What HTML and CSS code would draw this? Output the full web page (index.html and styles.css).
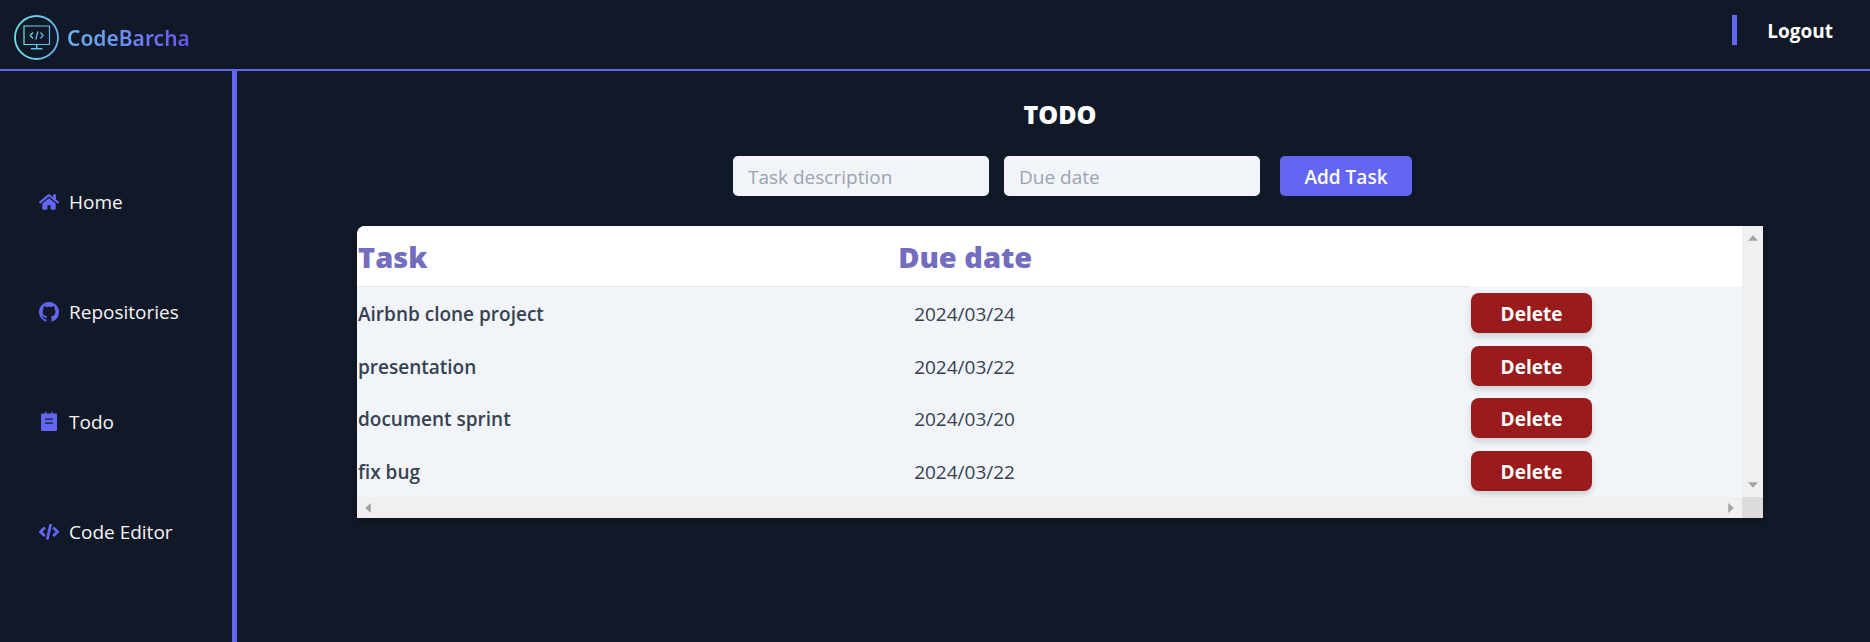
FILE: index.html
```html
<!DOCTYPE html>
<html lang="en">
<head>
<meta charset="utf-8">
<meta name="viewport" content="width=device-width, initial-scale=1">
<title>CodeBarcha – Todo</title>
<link rel="stylesheet" href="styles.css">
</head>
<body>
<header class="topbar">
  <a class="brand" href="#">
    <svg class="brand-mark" viewBox="0 0 45 45" aria-hidden="true">
      <defs>
        <linearGradient id="ring" x1="0" y1="0" x2="1" y2="0">
          <stop offset="0" stop-color="#6fe0e6"/>
          <stop offset="1" stop-color="#66b4ee"/>
        </linearGradient>
      </defs>
      <g fill="none" stroke="url(#ring)">
        <circle cx="22.5" cy="22.5" r="21.5" stroke-width="1.8"/>
        <path d="M10 11h25.5v18.500H10z" stroke-width="1.2"/>
        <path d="M22.700 29.500L22.710 33.500" stroke="#62c4ea" stroke-width="1.4"/>
        <path d="M17 33.800L28.500 33.810" stroke="#62c4ea" stroke-width="1.4"/>
        <path d="M19 17.500l-2.700 3 2.700 3M26.500 17.500l2.700 3-2.700 3M23.800 16.500l-2 8" stroke-width="1.200"/>
      </g>
    </svg>
    <span class="brand-name">CodeBarcha</span>
  </a>
  <div class="account"><button class="logout" type="button">Logout</button></div>
</header>
<div class="layout">
  <nav class="sidebar">
    <a class="nav-link" href="#">
      <svg class="nav-icon" viewBox="0 0 576 512" aria-hidden="true"><path d="M280.370 148.260L96 300.110V464a16 16 0 0 0 16 16l112.060-.290a16 16 0 0 0 15.920-16V368a16 16 0 0 1 16-16h64a16 16 0 0 1 16 16v95.640a16 16 0 0 0 16 16.050L464 480a16 16 0 0 0 16-16V300L295.670 148.260a12.190 12.190 0 0 0-15.300 0zM571.600 251.470L488 182.560V44.050a12 12 0 0 0-12-12h-56a12 12 0 0 0-12 12v72.610L318.470 43a48 48 0 0 0-61 0L4.340 251.470a12 12 0 0 0-1.600 16.900l25.500 31A12 12 0 0 0 45.150 301l235.220-193.740a12.190 12.190 0 0 1 15.300 0L530.900 301a12 12 0 0 0 16.900-1.600l25.500-31a12 12 0 0 0-1.700-16.930z"/></svg>
      <span>Home</span>
    </a>
    <a class="nav-link" href="#">
      <svg class="nav-icon" viewBox="0 0 16 16" aria-hidden="true"><path d="M8 0C3.580 0 0 3.580 0 8c0 3.540 2.290 6.530 5.470 7.590.4.070.55-.170.55-.380 0-.190-.010-.820-.010-1.490-2.010.370-2.530-.490-2.690-.940-.090-.230-.480-.940-.820-1.130-.280-.150-.680-.520-.010-.530.630-.010 1.080.580 1.230.820.720 1.210 1.870.870 2.330.660.070-.520.280-.870.510-1.070-1.780-.200-3.640-.890-3.640-3.950 0-.870.310-1.590.820-2.150-.080-.200-.360-1.020.080-2.120 0 0 .670-.210 2.200.820.640-.180 1.320-.270 2-.270s1.360.090 2 .270c1.530-1.040 2.200-.820 2.200-.820.440 1.100.160 1.920.080 2.120.510.560.820 1.270.820 2.150 0 3.070-1.870 3.750-3.650 3.950.290.250.540.730.540 1.480 0 1.070-.010 1.930-.010 2.200 0 .210.150.460.550.380A8.010 8.010 0 0 0 16 8c0-4.420-3.580-8-8-8z"/></svg>
      <span>Repositories</span>
    </a>
    <a class="nav-link" href="#">
      <svg class="nav-icon" viewBox="0 0 20 20" aria-hidden="true"><path fill-rule="evenodd" d="M3 1.500h3V0h1.500v1.500h5V0H14v1.500h3a1 1 0 0 1 1 1V18a1 1 0 0 1-1 1H3a1 1 0 0 1-1-1V2.500a1 1 0 0 1 1-1zM6 6.500v1.300h8V6.500zM6 10.500v1.300h8v-1.300z"/></svg>
      <span>Todo</span>
    </a>
    <a class="nav-link" href="#">
      <svg class="nav-icon" viewBox="0 0 20 20" aria-hidden="true"><path d="M5.800 5.500L1.500 9.800l4.300 4.300M14.200 5.500l4.300 4.300-4.300 4.300M11.800 2l-3.600 15.500" fill="none" stroke="currentColor" stroke-width="2.800"/></svg>
      <span>Code Editor</span>
    </a>
  </nav>
  <main class="content">
    <h1 class="title">TODO</h1>
    <form class="task-form">
      <input class="field" type="text" placeholder="Task description" aria-label="Task description">
      <input class="field" type="text" placeholder="Due date" aria-label="Due date">
      <button class="add" type="button">Add Task</button>
    </form>
    <section class="panel">
      <table class="tasks">
        <thead><tr><th class="col-task">Task</th><th>Due date</th><td class="col-action"></td></tr></thead>
        <tbody>
          <tr><td class="name">Airbnb clone project</td><td class="date">2024/03/24</td><td><button class="delete" type="button">Delete</button></td></tr>
          <tr><td class="name">presentation</td><td class="date">2024/03/22</td><td><button class="delete" type="button">Delete</button></td></tr>
          <tr><td class="name">document sprint</td><td class="date">2024/03/20</td><td><button class="delete" type="button">Delete</button></td></tr>
          <tr><td class="name">fix bug</td><td class="date">2024/03/22</td><td><button class="delete" type="button">Delete</button></td></tr>
        </tbody>
      </table>
      <div class="track track-y">
        <svg class="arrow" viewBox="0 0 9 9" aria-hidden="true"><path d="M0 7l4.500-5L9 7z"/></svg>
        <svg class="arrow" viewBox="0 0 9 9" aria-hidden="true"><path d="M0 2l4.500 5L9 2z"/></svg>
      </div>
      <div class="track track-x">
        <svg class="arrow" viewBox="0 0 9 9" aria-hidden="true"><path d="M7 0L2 4.500 7 9z"/></svg>
        <svg class="arrow" viewBox="0 0 9 9" aria-hidden="true"><path d="M2 0l5 4.500L2 9z"/></svg>
      </div>
      <div class="corner"></div>
    </section>
  </main>
</div>
</body>
</html>
```

FILE: styles.css
```css
* { box-sizing: border-box; }

body {
  margin: 0;
  min-height: 100vh;
  display: flex;
  flex-direction: column;
  background: #111827;
  color: #fff;
  font-family: "Open Sans", "Noto Sans", sans-serif;
  font-size: 19px;
  line-height: 30px;
}

button, input { font: inherit; border: 0; }
button { cursor: pointer; }
a { color: inherit; text-decoration: none; }

.topbar {
  display: flex;
  justify-content: space-between;
  align-items: flex-start;
  padding: 15px 37px 9px 14px;
  border-bottom: 2px solid #6366f1;
}

.brand { display: flex; align-items: center; gap: 8px; }
.brand-mark { width: 45px; height: 45px; }
.brand-name {
  font-family: "Noto Sans", sans-serif;
  font-size: 21px;
  font-weight: 600;
  background: linear-gradient(90deg, #69b3f0, #6b8cf5 50%, #6a4fe8);
  -webkit-background-clip: text;
  background-clip: text;
  color: transparent;
}

.account { padding-left: 30px; border-left: 5px solid #6366f1; }
.logout { display: block; height: 30px; padding: 2px 0 0; background: none; color: #fff; font-weight: 700; line-height: 28px; }

.layout { flex: 1; display: flex; }

.sidebar {
  width: 237px;
  flex: none;
  display: flex;
  flex-direction: column;
  gap: 80px;
  padding: 116px 0 0 39px;
  border-right: 5px solid #6366f1;
}
.nav-link { display: flex; align-items: center; gap: 10px; color: #f5f5f5; }
.nav-icon { width: 20px; height: 20px; fill: #6366f1; color: #6366f1; }

.content { flex: 1; padding: 23px 107px 40px 120px; }
.title { margin: 0 0 22px; font-size: 25px; line-height: 40px; font-weight: 800; text-align: center; }

.task-form { display: flex; justify-content: center; padding-left: 25px; }
.field { width: 256px; height: 40px; margin-right: 15px; padding: 2px 15px 0; border-radius: 5px; background: #f1f5f9; color: #374151; }
.field::placeholder { color: #9ca3af; opacity: 1; }
.add { width: 132px; height: 40px; margin-left: 5px; padding: 2px 0 0; border-radius: 5px; background: #6366f1; color: #fff; font-weight: 600; }

.panel {
  display: grid;
  grid-template-columns: 1fr 21px;
  grid-template-rows: auto 21px;
  margin-top: 30px;
  border-top-left-radius: 8px;
  overflow: hidden;
  background: #f1f5f9;
  box-shadow: 0 4px 8px rgba(0, 0, 0, 0.2);
}

.tasks { width: 100%; height: 271px; table-layout: fixed; border-collapse: separate; border-spacing: 0; color: #374151; }
.tasks th, .tasks td { padding: 0 1px; text-align: left; }
.tasks thead { background: #fff; }
.tasks thead tr { height: 61px; }
.tasks th { padding-top: 2px; border-bottom: 1px solid #e5e7eb; color: #746dbf; font-size: 29px; font-weight: 800; }
.col-task { width: 39%; }
.col-action { width: 272px; }
.tasks .name { padding-top: 2px; font-weight: 600; }
.tasks .date { padding: 2px 0 0 17px; }
.delete {
  display: block;
  width: 121px;
  height: 40px;
  padding: 2px 0 0;
  border-radius: 8px;
  background: #991b1b;
  color: #fff;
  font-weight: 700;
  box-shadow: 0 4px 6px rgba(0, 0, 0, 0.14);
}

.track { display: flex; justify-content: space-between; align-items: center; background: #f0f0f0; }
.track-y { flex-direction: column; padding: 7px 0; }
.track-x { padding: 0 6px; }
.arrow { width: 10px; height: 10px; fill: #a3a3a3; }
.corner { background: #dcdcdc; }
```
